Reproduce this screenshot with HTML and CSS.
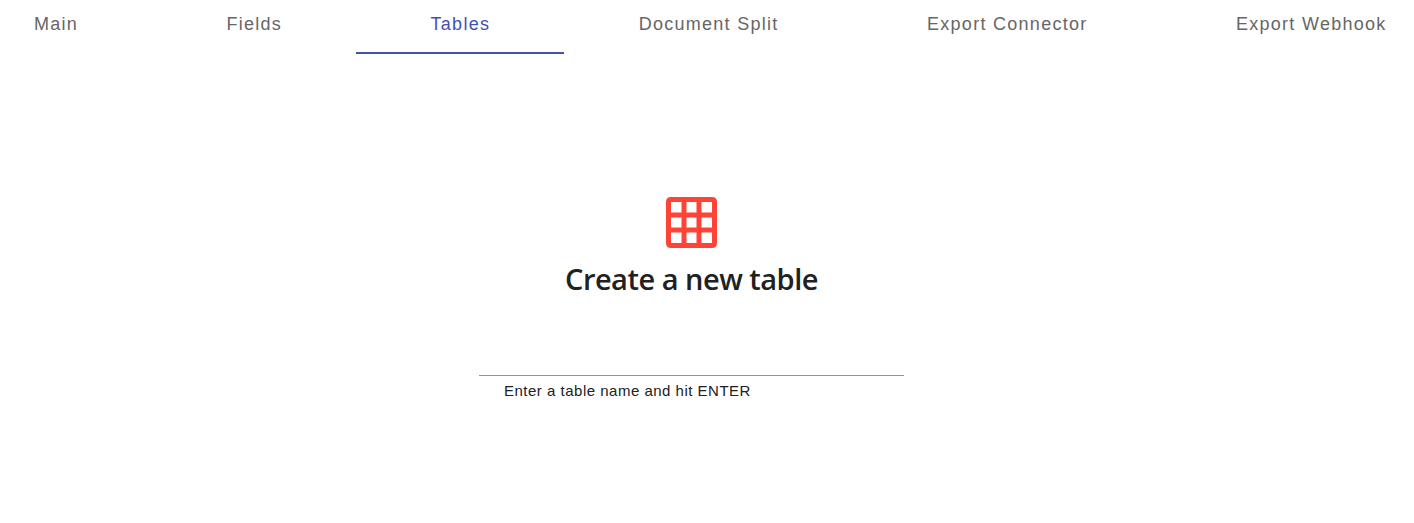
FILE: index.html
```html
<!DOCTYPE html>
<html lang="en">
<head>
<meta charset="utf-8">
<title>Tables</title>
<link rel="stylesheet" href="styles.css">
</head>
<body>
<nav class="tabs">
<a class="tab">Main</a>
<a class="tab">Fields</a>
<a class="tab active">Tables</a>
<a class="tab">Document Split</a>
<a class="tab">Export Connector</a>
<a class="tab">Export Webhook</a>
</nav>
<main class="empty">
<svg class="icon" viewBox="0 0 51 51"><path fill="#ff4436" fill-rule="evenodd" d="M5 0H46Q51 0 51 5V46Q51 51 46 51H5Q0 51 0 46V5Q0 0 5 0ZM5 5V15.500H15.500V5ZM20.500 5V15.500H30.500V5ZM35.500 5V15.500H46V5ZM5 20.500V30.500H15.500V20.500ZM20.500 20.500V30.500H30.500V20.500ZM35.500 20.500V30.500H46V20.500ZM5 35.500V46H15.500V35.500ZM20.500 35.500V46H30.500V35.500ZM35.500 35.500V46H46V35.500Z"/></svg>
<h1 class="title">Create a new table</h1>
<label class="field">
<input class="input" type="text" aria-label="Table name">
<span class="hint">Enter a table name and hit ENTER</span>
</label>
</main>
</body>
</html>
```
FILE: styles.css
```css
* { box-sizing: border-box; }
body { margin: 0; background: #fff; overflow: hidden; font-family: "Liberation Sans", Arial, sans-serif; }
.tabs { display: flex; width: 1461px; height: 54px; margin-left: -40.5px; }
.tab { flex: none; padding: 13px 74px 0 74.4px; font-size: 18px; line-height: 22px; letter-spacing: 1.28px; color: #666; white-space: nowrap; }
.tab.active { color: #3f51b5; border-bottom: 2px solid #3f51b5; }
.empty { display: flex; flex-direction: column; align-items: center; width: 1383px; padding-top: 143px; }
.icon { width: 51px; height: 51px; }
.title { margin: 10px 0 0; font: 600 29px/42px "Open Sans", "Noto Sans", sans-serif; letter-spacing: -.5px; color: #212121; white-space: nowrap; }
.field { display: block; width: 425px; margin-top: 34px; }
.input { display: block; width: 100%; height: 42px; padding: 0 25px; border: 0; border-bottom: 1px solid #949494; background: transparent; outline: 0; }
.hint { display: block; padding: 6px 25px 0; font-size: 15px; line-height: 18px; letter-spacing: .5px; color: #212121; }
```
